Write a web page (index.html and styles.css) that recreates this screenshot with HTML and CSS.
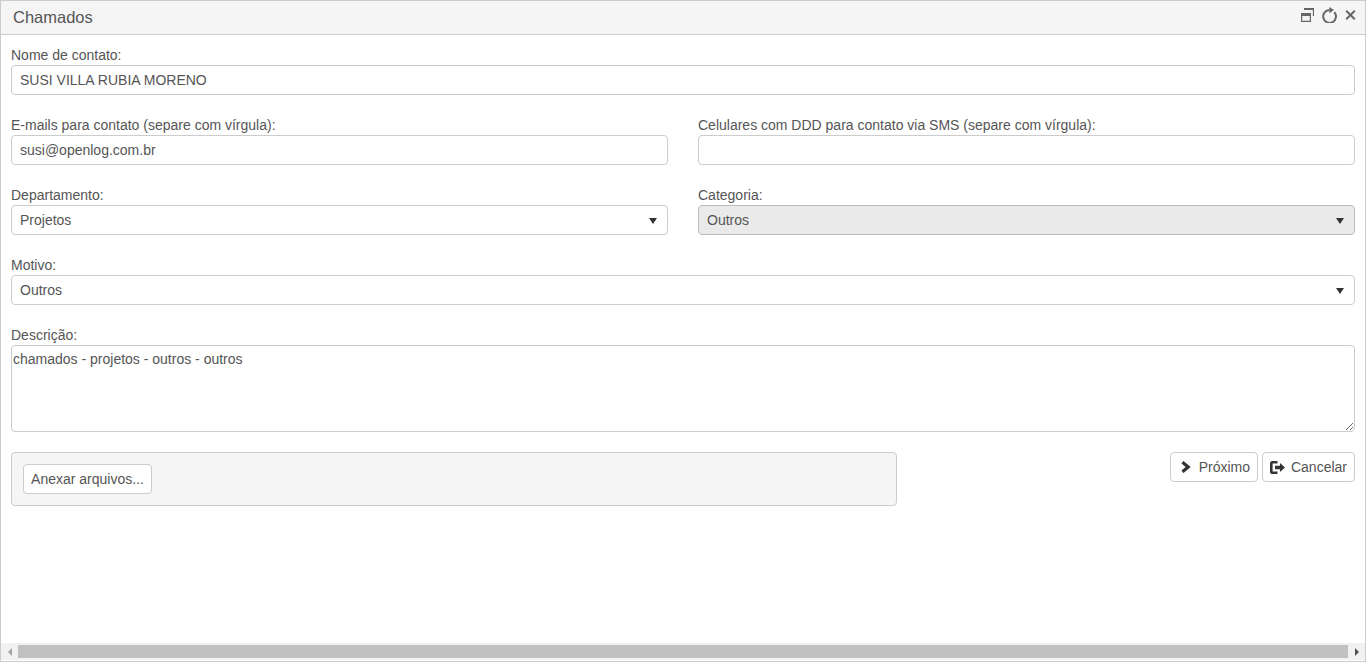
FILE: index.html
```html
<!DOCTYPE html>
<html lang="pt-BR">
<head>
<meta charset="utf-8">
<title>Chamados</title>
<link rel="stylesheet" href="styles.css">
</head>
<body>
<div class="window">
  <header class="titlebar">
    <h1 class="title">Chamados</h1>
    <div class="tools">
      <svg class="tool" width="13" height="14" viewBox="0 0 13 14"><path d="M3 .5h9.500v7.500" fill="none" stroke="#666" stroke-width="1.300"/><path d="M3 0h10v2H3z" fill="#666"/><path d="M.6 6h8.800v7.400H.6z" fill="none" stroke="#666" stroke-width="1.200"/><path d="M0 5h10v3H0z" fill="#666"/></svg>
      <svg class="tool" width="15" height="16" viewBox="0 0 15 16"><path d="M12.300 5.200A6.400 6.400 0 1 1 7.500 3.100" fill="none" stroke="#666" stroke-width="2"/><path d="M7.300 0v6.300L12 3.100z" fill="#666"/></svg>
      <svg class="tool" width="11" height="10" viewBox="0 0 11 10"><path d="M1.200 .8l8.600 8.400M9.800 .8L1.200 9.200" fill="none" stroke="#666" stroke-width="2"/></svg>
    </div>
  </header>
  <main class="content">
    <div class="row">
      <div class="field">
        <label class="label">Nome de contato:</label>
        <input class="control" type="text" value="SUSI VILLA RUBIA MORENO">
      </div>
    </div>
    <div class="row">
      <div class="field">
        <label class="label">E-mails para contato (separe com vírgula):</label>
        <input class="control" type="text" value="susi@openlog.com.br">
      </div>
      <div class="field">
        <label class="label">Celulares com DDD para contato via SMS (separe com vírgula):</label>
        <input class="control" type="text" value="">
      </div>
    </div>
    <div class="row">
      <div class="field">
        <label class="label">Departamento:</label>
        <div class="select-wrap"><select class="control select"><option>Projetos</option></select></div>
      </div>
      <div class="field">
        <label class="label">Categoria:</label>
        <div class="select-wrap"><select class="control select disabled"><option>Outros</option></select></div>
      </div>
    </div>
    <div class="row">
      <div class="field">
        <label class="label">Motivo:</label>
        <div class="select-wrap"><select class="control select"><option>Outros</option></select></div>
      </div>
    </div>
    <div class="row">
      <div class="field">
        <label class="label">Descrição:</label>
        <textarea class="control textarea">chamados - projetos - outros - outros</textarea>
      </div>
    </div>
    <div class="actions">
      <div class="attach-panel">
        <button class="btn attach" type="button">Anexar arquivos...</button>
      </div>
      <div class="nav-buttons">
        <button class="btn next" type="button">
          <svg width="10" height="12" viewBox="0 0 10 12"><path d="M1.500 1L7.500 6l-6 5" fill="none" stroke="#333" stroke-width="3.300"/></svg>
          Próximo
        </button>
        <button class="btn cancel" type="button">
          <svg width="15" height="13" viewBox="0 0 15 13"><path d="M7.500 1.300H2.300a1 1 0 0 0-1 1v8.400a1 1 0 0 0 1 1h5.200" fill="none" stroke="#333" stroke-width="2.600"/><path d="M5 4.700h5V2L15 6.500 10 11V8.300H5z" fill="#333"/></svg>
          Cancelar
        </button>
      </div>
    </div>
  </main>
  <div class="hscroll">
    <span class="arrow left"></span>
    <div class="track"><div class="thumb"></div></div>
    <span class="arrow right"></span>
  </div>
</div>
</body>
</html>
```

FILE: styles.css
```css
* { box-sizing: border-box; }
html, body { margin: 0; height: 100%; overflow: hidden; }
body { font-family: "Liberation Sans", Arial, sans-serif; font-size: 14px; color: #555; background: #fff; }
.window { height: 662px; width: 1366px; border: 1px solid #ccc; display: flex; flex-direction: column; background: #fff; }
.titlebar { height: 34px; flex: none; background: #f5f5f5; border-bottom: 1px solid #ccc; display: flex; align-items: center; justify-content: space-between; padding: 0 9px 0 12px; }
.title { margin: 0; font-size: 16.500px; font-weight: 400; color: #555; }
.tools { display: flex; align-items: center; gap: 8px; padding-bottom: 5px; }
.tool { display: block; }
.content { flex: 1; padding: 10px 10px 0; min-height: 0; }
.row { display: flex; gap: 30px; margin-bottom: 20px; }
.field { flex: 1; min-width: 0; }
.label { display: block; height: 20px; line-height: 20px; color: #555; }
.control { display: block; width: 100%; height: 30px; border: 1px solid #ccc; border-radius: 4px; padding: 0 8px; font: 14px "Liberation Sans", Arial, sans-serif; color: #555; background: #fff; outline: none; }
.select-wrap { position: relative; }
.select-wrap::after { content: ""; position: absolute; right: 11px; top: 13px; border-left: 4.500px solid transparent; border-right: 4.500px solid transparent; border-top: 6px solid #333; pointer-events: none; }
.select { appearance: none; -webkit-appearance: none; }
.disabled { background: #eaeaea; border-color: #bbb; }
.textarea { height: 87px; padding: 5px 1px; resize: vertical; line-height: 16px; overflow: auto; }
.actions { display: flex; justify-content: space-between; align-items: flex-start; }
.attach-panel { width: 886px; height: 54px; background: #f5f5f5; border: 1px solid #ccc; border-radius: 4px; padding: 11px; }
.btn { height: 30px; border: 1px solid #ccc; border-radius: 4px; background: #fff; color: #555; font: 14px "Liberation Sans", Arial, sans-serif; padding: 0 7px; display: inline-flex; align-items: center; }
.attach { width: 129px; justify-content: center; }
.nav-buttons { display: flex; gap: 4px; }
.next { width: 88px; padding-left: 10px; gap: 8px; }
.cancel { width: 93px; gap: 6px; }
.hscroll { height: 17px; margin-top: auto; flex: none; margin-bottom: 1px; background: #f1f1f1; display: flex; align-items: center; }
.track { flex: 1; height: 13px; padding: 0; }
.thumb { height: 13px; background: #c1c1c1; }
.arrow { flex: none; width: 17px; height: 17px; display: flex; align-items: center; justify-content: center; }
.arrow::before { content: ""; border-top: 4px solid transparent; border-bottom: 4px solid transparent; }
.arrow.left::before { border-right: 4px solid #a3a3a3; }
.arrow.right::before { border-left: 4px solid #505050; }
```
